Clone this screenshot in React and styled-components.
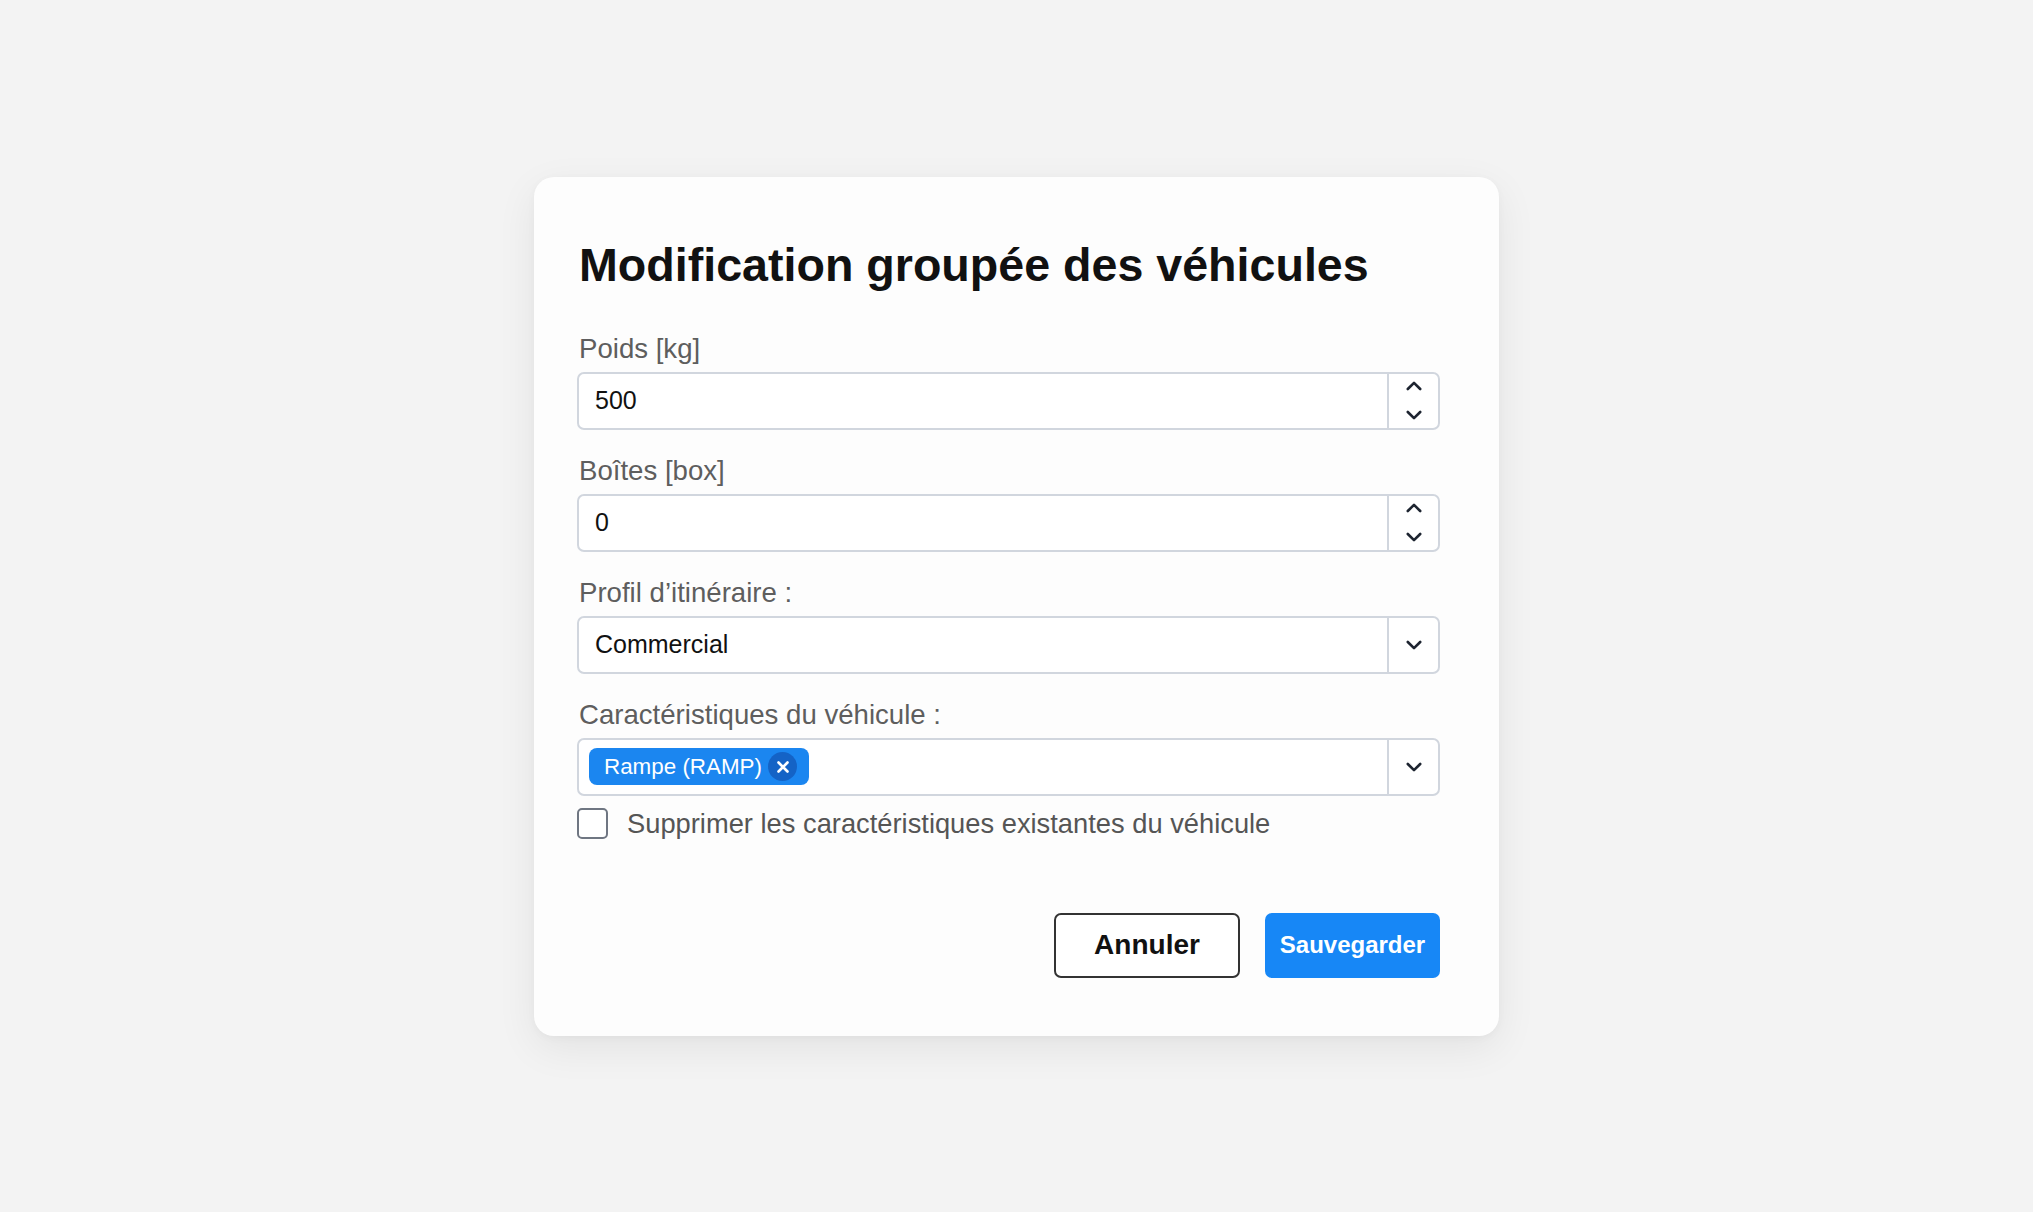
import React, { useState } from 'react'
import styled, { createGlobalStyle } from 'styled-components'

const GlobalStyle = createGlobalStyle`
    html, body {
        margin: 0;
        padding: 0;
        background: #f3f3f3;
        font-family: "Liberation Sans", Arial, sans-serif;
    }
    * { box-sizing: border-box; }
`

const Page = styled.div`
    min-height: 100vh;
    display: flex;
    align-items: center;
    justify-content: center;
`

const Card = styled.div`
    width: 965px;
    padding: 61px 59px 58px 43px;
    background: #fdfdfd;
    border-radius: 20px;
    box-shadow: 0 12px 40px rgba(0, 0, 0, 0.07), 0 2px 8px rgba(0, 0, 0, 0.03);
`

const Title = styled.h1`
    margin: 0 0 40px 2px;
    font-size: 46.6px;
    line-height: 55px;
    font-weight: 700;
    color: #111;
`

const Fields = styled.div`
    display: flex;
    flex-direction: column;
    gap: 25px;
`

const Field = styled.div`
    display: flex;
    flex-direction: column;
    gap: 8px;
`

const Label = styled.label`
    padding-left: 2px;
    font-size: 27.6px;
    line-height: 31px;
    color: #5e5e5e;
`

const Box = styled.div`
    display: flex;
    height: 58px;
    border: 2px solid #d1d6de;
    border-radius: 7px;
    background: #fff;
    overflow: hidden;
`

const ValueInput = styled.input`
    flex: 1;
    min-width: 0;
    border: none;
    outline: none;
    background: transparent;
    padding: 0 16px;
    font-family: inherit;
    font-size: 25px;
    color: #111;
`

const TagArea = styled.div`
    flex: 1;
    display: flex;
    align-items: center;
    padding: 0 10px;
`

const Side = styled.div`
    width: 51px;
    flex: none;
    border-left: 2px solid #d1d6de;
    display: flex;
    flex-direction: column;
    align-items: center;
    justify-content: center;
    gap: ${p => (p.$stepper ? '19px' : '0')};
`

const Tag = styled.span`
    display: inline-flex;
    align-items: center;
    gap: 6px;
    height: 37px;
    padding: 0 12px 0 15px;
    border-radius: 8px;
    background: #1b86f0;
    color: #fff;
    font-size: 22.4px;
`

const TagClose = styled.span`
    width: 29px;
    height: 29px;
    border-radius: 50%;
    background: #1463c6;
    display: flex;
    align-items: center;
    justify-content: center;
`

const CheckRow = styled.label`
    display: flex;
    align-items: center;
    gap: 19px;
    margin-top: 12px;
    font-size: 27.3px;
    color: #555;
    cursor: pointer;
`

const CheckBox = styled.span`
    width: 31px;
    height: 31px;
    flex: none;
    border: 2px solid ${p => (p.$checked ? '#1b86f0' : '#6f7682')};
    background: ${p => (p.$checked ? '#1b86f0' : '#fff')};
    border-radius: 5px;
`

const Actions = styled.div`
    display: flex;
    justify-content: flex-end;
    gap: 25px;
    margin-top: 73px;
`

const Button = styled.button`
    height: 65px;
    border-radius: 7px;
    font-family: inherit;
    font-weight: 700;
    cursor: pointer;
    ${p => p.$primary ? `
        width: 175px;
        font-size: 24px;
        background: #1787f6;
        border: none;
        color: #fff;
    ` : `
        width: 186px;
        font-size: 28px;
        background: #fff;
        border: 2px solid #333;
        color: #111;
    `}
`

function Chevron({ up }) {
    return (
        <svg width="16" height="10" viewBox="0 0 16 10" fill="none">
            <polyline
                points={up ? '1.8,8 8,1.8 14.2,8' : '1.8,2 8,8.2 14.2,2'}
                stroke="#1d2430"
                strokeWidth="2.6"
                strokeLinecap="round"
                strokeLinejoin="round"
            />
        </svg>
    )
}

function NumberField({ label, value }) {
    return (
        <Field>
            <Label>{label}</Label>
            <Box>
                <ValueInput type="text" defaultValue={value} />
                <Side $stepper>
                    <Chevron up />
                    <Chevron />
                </Side>
            </Box>
        </Field>
    )
}

export default function App() {
    const [removeExisting, setRemoveExisting] = useState(false)
    return (
        <Page>
            <GlobalStyle />
            <Card>
                <Title>Modification groupée des véhicules</Title>
                <Fields>
                    <NumberField label="Poids [kg]" value="500" />
                    <NumberField label="Boîtes [box]" value="0" />
                    <Field>
                        <Label>Profil d’itinéraire :</Label>
                        <Box>
                            <ValueInput type="text" readOnly value="Commercial" />
                            <Side><Chevron /></Side>
                        </Box>
                    </Field>
                    <Field>
                        <Label>Caractéristiques du véhicule :</Label>
                        <Box>
                            <TagArea>
                                <Tag>
                                    Rampe (RAMP)
                                    <TagClose>
                                        <svg width="14" height="14" viewBox="0 0 14 14">
                                            <path d="M2.5 2.5 L11.5 11.5 M11.5 2.5 L2.5 11.5" stroke="#fff" strokeWidth="2.6" strokeLinecap="round" />
                                        </svg>
                                    </TagClose>
                                </Tag>
                            </TagArea>
                            <Side><Chevron /></Side>
                        </Box>
                    </Field>
                </Fields>
                <CheckRow onClick={() => setRemoveExisting(!removeExisting)}>
                    <CheckBox $checked={removeExisting} />
                    Supprimer les caractéristiques existantes du véhicule
                </CheckRow>
                <Actions>
                    <Button>Annuler</Button>
                    <Button $primary>Sauvegarder</Button>
                </Actions>
            </Card>
        </Page>
    )
}
